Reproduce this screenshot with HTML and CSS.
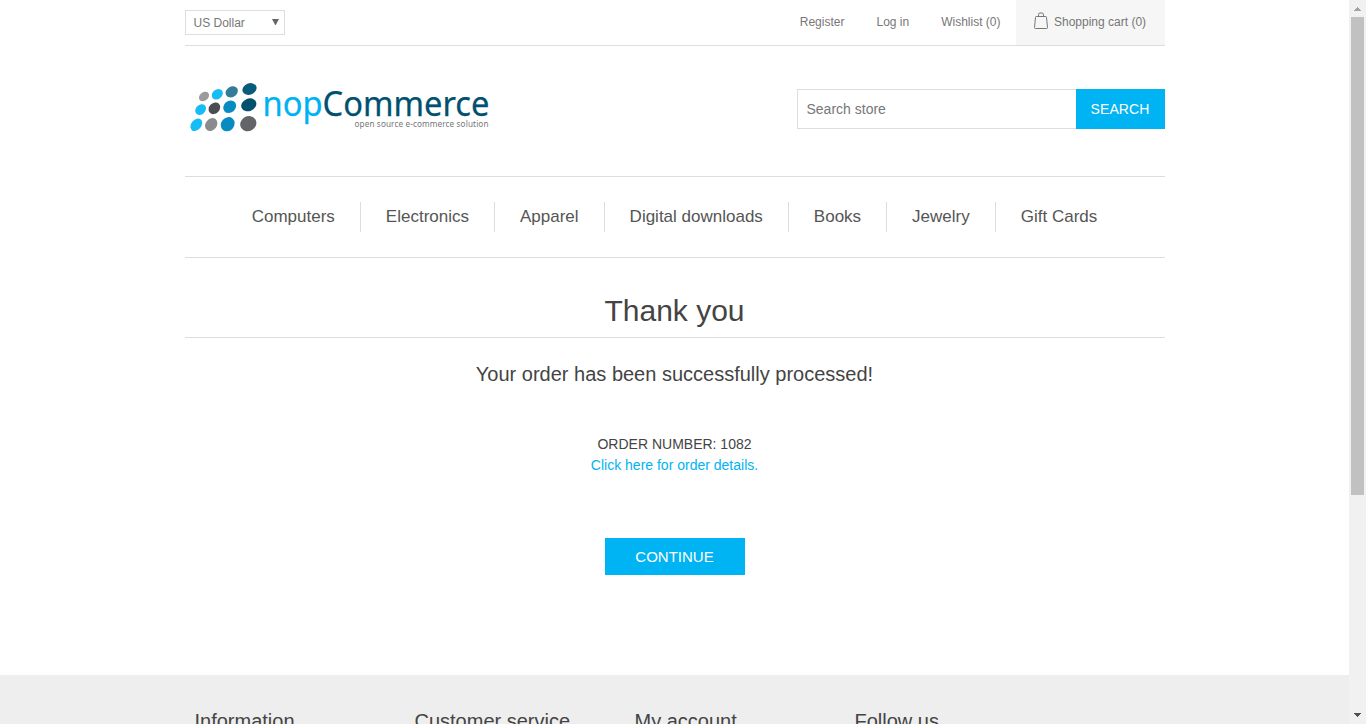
FILE: index.html
```html
<!DOCTYPE html>
<html lang="en">
<head>
<meta charset="utf-8">
<title>Thank you</title>
<link rel="stylesheet" href="styles.css">
</head>
<body>
<div class="window">
  <div class="page">
    <header class="wrap">
      <div class="header-upper">
        <div class="currency"><span>US Dollar</span><svg width="7" height="6" viewBox="0 0 7 6"><path d="M0 0h7L3.800 6h-.6z" fill="#666"/></svg></div>
        <nav class="header-links">
          <a>Register</a><a>Log in</a><a>Wishlist (0)</a>
          <a class="cart"><svg width="14" height="18" viewBox="0 0 14 18" fill="none" stroke="#777"><path d="M2.200 4.500h9.600q.6 0 .7.7l1 10.300q.1 1-.9 1H1.400q-1 0-.9-1l1-10.300q.1-.7.7-.7zM4.500 4.500V2.800Q4.500 1 6 1h2q1.500 0 1.500 1.800v1.700"/></svg><span>Shopping cart (0)</span></a>
        </nav>
      </div>
      <div class="header-lower">
        <svg class="logo" width="310" height="60" viewBox="185 78 310 60">
          <g>
            <ellipse cx="204" cy="96.500" rx="5.500" ry="4.200" fill="#999b9e" transform="rotate(-38 204 96.500)"/>
            <ellipse cx="217.300" cy="94.300" rx="6" ry="4.800" fill="#16bdf5" transform="rotate(-38 217.300 94.300)"/>
            <ellipse cx="231.700" cy="91.800" rx="6.500" ry="5.200" fill="#347b9b" transform="rotate(-32 231.700 91.800)"/>
            <ellipse cx="249.500" cy="89" rx="7.300" ry="5.600" fill="#075c7c" transform="rotate(-22 249.500 89)"/>
            <ellipse cx="200.600" cy="109.600" rx="6" ry="4.700" fill="#16bdf5" transform="rotate(-45 200.600 109.600)"/>
            <ellipse cx="214.400" cy="108.300" rx="6.400" ry="5.200" fill="#4c4d50" transform="rotate(-45 214.400 108.300)"/>
            <ellipse cx="229.700" cy="106.800" rx="6.900" ry="5.800" fill="#078bc0" transform="rotate(-40 229.700 106.800)"/>
            <ellipse cx="248.800" cy="104.800" rx="7.800" ry="6.200" fill="#02506e" transform="rotate(-24 248.800 104.800)"/>
            <ellipse cx="196.300" cy="124.800" rx="7" ry="5" fill="#16bdf5" transform="rotate(-50 196.300 124.800)"/>
            <ellipse cx="211.200" cy="124.600" rx="7" ry="5.600" fill="#8a8b8d" transform="rotate(-52 211.200 124.600)"/>
            <ellipse cx="227.700" cy="124.200" rx="7.500" ry="6.500" fill="#078bc0" transform="rotate(-50 227.700 124.200)"/>
            <ellipse cx="248.300" cy="123.700" rx="8.300" ry="7.400" fill="#626468" transform="rotate(-30 248.300 123.700)"/>
          </g>
          <text class="logo-name" x="262.500" y="116" textLength="227" lengthAdjust="spacingAndGlyphs"><tspan fill="#00b2f3" stroke="#00b2f3">nop</tspan><tspan fill="#00516f" stroke="#00516f">Commerce</tspan></text>
          <text class="logo-tag" x="354.500" y="126.500" textLength="134" lengthAdjust="spacing">open source e-commerce solution</text>
        </svg>
        <div class="search"><div class="search-box">Search store</div><div class="search-button">SEARCH</div></div>
      </div>
    </header>
    <nav class="menu wrap"><a>Computers</a><a>Electronics</a><a>Apparel</a><a>Digital downloads</a><a>Books</a><a>Jewelry</a><a>Gift Cards</a></nav>
    <main class="wrap">
      <h1>Thank you</h1>
      <h2>Your order has been successfully processed!</h2>
      <div class="order">ORDER NUMBER: 1082<br><a>Click here for order details.</a></div>
      <div class="continue">CONTINUE</div>
    </main>
    <footer><div class="footer-columns wrap"><h3>Information</h3><h3>Customer service</h3><h3>My account</h3><h3>Follow us</h3></div></footer>
  </div>
  <div class="scrollbar">
    <svg width="17" height="17"><path d="M5 11h7v-1h-1V9h-1V8H9V7H8v1H7v1H6v1H5z" fill="#a3a3a3"/></svg>
    <div class="thumb"></div>
    <svg class="down" width="17" height="17"><path d="M5 6h7v1h-1v1h-1v1H9v1H8V9H7V8H6V7H5z" fill="#505050"/></svg>
  </div>
</div>
</body>
</html>
```
FILE: styles.css
```css
* { box-sizing: border-box; }
body { margin: 0; overflow: hidden; font-family: "Liberation Sans", Arial, sans-serif; font-size: 14px; color: #444; background: #fff; }
h1, h2, h3 { margin: 0; font-weight: normal; }
.window { display: flex; width: 1366px; height: 724px; overflow: hidden; }
.page { width: 1349px; height: 724px; overflow: hidden; }
.wrap { width: 980px; margin: 0 auto; }
.header-upper { display: flex; justify-content: space-between; height: 46px; border-bottom: 1px solid #ddd; font-size: 12px; color: #777; }
.currency { display: flex; align-items: center; justify-content: space-between; width: 100px; height: 25px; margin-top: 10px; padding: 0 5px 0 8px; border: 1px solid #ddd; }
.currency svg { margin-top: -2px; }
.header-links { display: flex; line-height: 44px; }
.header-links a { margin-left: 32px; }
.header-links .cart { display: flex; width: 149px; height: 45px; margin-left: 15px; padding-left: 18px; background: #f6f6f6; }
.cart svg { margin: 12px 6px 0 .5px; }
.header-lower { display: flex; justify-content: space-between; height: 130px; }
.logo { margin: 32px 0 0 .5px; }
.logo-name { font-family: "Noto Sans", "Open Sans", sans-serif; font-size: 34px; stroke-width: .25px; }
.logo-tag { font-family: "Noto Sans", "Open Sans", sans-serif; font-size: 8.2px; fill: #777; }
.search { display: flex; width: 368px; height: 40px; margin-top: 43px; line-height: 38px; }
.search-box { width: 279px; padding-left: 9px; border: 1px solid #ddd; border-right: 0; color: #777; font-size: 14px; }
.search-button { width: 89px; line-height: 40px; text-align: center; background: #00b3f2; color: #fff; font-size: 14px; letter-spacing: .1px; }
.menu { display: flex; justify-content: center; align-items: center; height: 82px; border-top: 1px solid #ddd; border-bottom: 1px solid #ddd; font-size: 17px; color: #555; }
.menu a { padding: 0 25px; height: 30px; line-height: 29px; }
.menu a + a { border-left: 1px solid #ddd; }
main { height: 417px; text-align: center; }
h1 { height: 80px; padding-top: 35px; line-height: 36px; border-bottom: 1px solid #ddd; font-size: 30px; }
h2 { height: 96px; padding-top: 24px; line-height: 24px; font-size: 20px; }
.order { height: 104px; line-height: 21px; }
.order a { color: #00b3f2; }
.continue { width: 140px; height: 37px; margin: 0 auto; line-height: 37px; background: #00b3f2; color: #fff; font-size: 15px; }
footer { height: 49px; background: #eee; overflow: hidden; }
.footer-columns { display: grid; grid-template-columns: repeat(4, 220px); padding: 34px 0 0 10px; }
h3 { font-size: 20px; line-height: 24px; }
.scrollbar { display: flex; flex-direction: column; width: 17px; height: 724px; background: #f1f1f1; }
.scrollbar svg { flex: none; }
.thumb { width: 13px; height: 478px; margin-left: 2px; background: #c1c1c1; }
.scrollbar .down { margin-top: auto; }
```
